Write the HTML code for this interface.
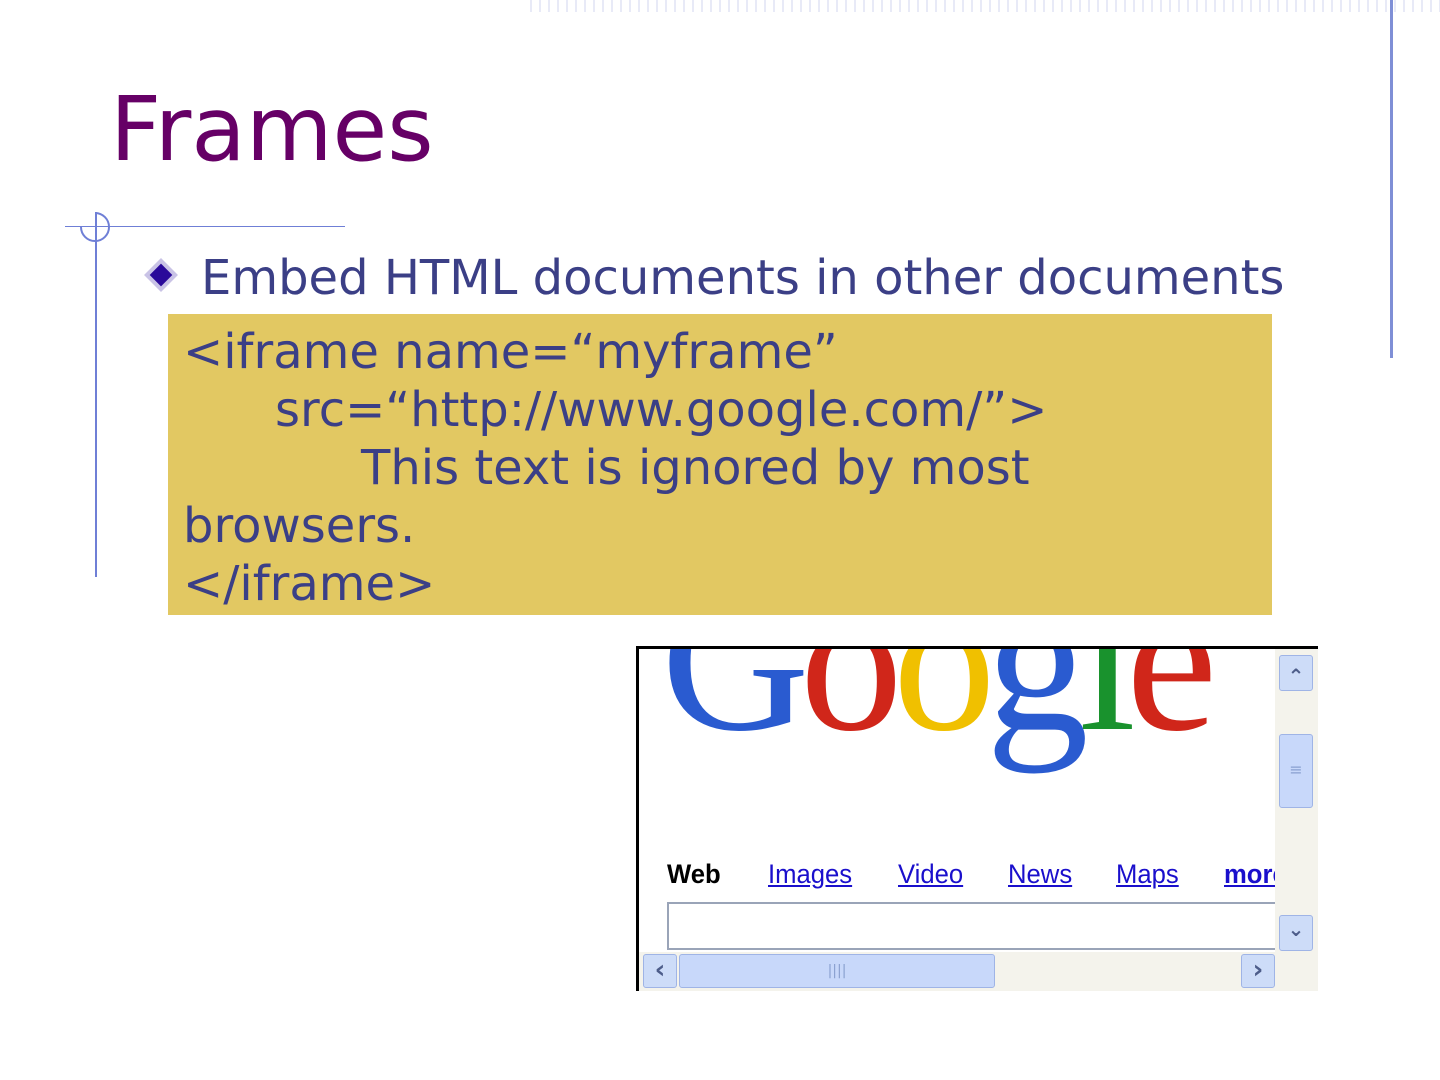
<!DOCTYPE html>
<html><head><meta charset="utf-8"><style>
body{margin:0;width:1440px;height:1080px;background:#fff;position:relative;overflow:hidden;font-family:"DejaVu Sans","Liberation Sans",sans-serif}
.a{position:absolute}
.l{position:absolute;top:210px;font-family:'Liberation Sans',sans-serif;font-size:27px;white-space:nowrap;color:#1a0fcc;text-decoration:underline;transform:scaleX(0.95);transform-origin:0 0}
</style></head><body>
<div class="a" style="left:530px;top:0;width:910px;height:12px;background:repeating-linear-gradient(90deg,#e6e8f6 0 2px,#fff 2px 9px);opacity:.9"></div>
<div class="a" style="left:1390px;top:0;width:3px;height:358px;background:#7f8fd6"></div>
<div class="a" style="left:110px;top:74px;font-size:89px;color:#660066;line-height:110px">Frames</div>
<div class="a" style="left:65px;top:226px;width:280px;height:1px;background:#6f7fd6"></div>
<div class="a" style="left:95px;top:212px;width:2px;height:365px;background:#6f7fd6"></div>
<div class="a" style="left:80px;top:212px;width:30px;height:30px;border:2px solid #6f7fd6;border-radius:50%;box-sizing:border-box;clip-path:inset(0 0 0 50%)"></div>
<div class="a" style="left:80px;top:212px;width:30px;height:30px;border:2px solid #6f7fd6;border-radius:50%;box-sizing:border-box;clip-path:inset(50% 50% 0 0)"></div>
<div class="a" style="left:149px;top:263px;width:24px;height:24px;background:#c9c3e6;transform:rotate(45deg)"></div>
<div class="a" style="left:153px;top:267px;width:16px;height:16px;background:#2a0a9a;transform:rotate(45deg)"></div>
<div class="a" style="left:201px;top:250px;font-size:48px;color:#3b3f86;line-height:56px;white-space:nowrap">Embed HTML documents in other documents</div>
<div class="a" style="left:168px;top:314px;width:1104px;height:301px;background:#e2c862"></div>
<div class="a" style="left:183px;top:323px;font-size:48px;color:#3b3f86;line-height:58px;white-space:nowrap">&lt;iframe name=“myframe”<br><span style="padding-left:92px">src=“http://www.google.com/”&gt;</span><br><span style="padding-left:178px">This text is ignored by most</span><br>browsers.<br>&lt;/iframe&gt;</div>
<div class="a" style="left:636px;top:646px;width:682px;height:345px;border-top:3px solid #000;border-left:3px solid #000;box-sizing:border-box;background:#fff;overflow:hidden">
 <div class="a" style="left:22px;top:-104px;font-family:'Liberation Serif',serif;font-size:206px;letter-spacing:-10px;white-space:nowrap;line-height:230px"><span style="color:#2a5bd0">G</span><span style="color:#d0261a">o</span><span style="color:#f0c000">o</span><span style="color:#2a5bd0">g</span><span style="color:#19922d">l</span><span style="color:#d0261a">e</span></div>
 <div class="l" style="left:28px;color:#000;text-decoration:none;font-weight:bold">Web</div>
 <div class="l" style="left:129px">Images</div>
 <div class="l" style="left:259px">Video</div>
 <div class="l" style="left:369px">News</div>
 <div class="l" style="left:477px">Maps</div>
 <div class="l" style="left:585px;font-weight:bold">more</div>
 <div class="a" style="left:28px;top:253px;width:620px;height:48px;border:2px solid #9aa4b8;box-sizing:border-box;background:#fff"></div>
 <div class="a" style="left:636px;top:0;width:46px;height:345px;background:#f4f3ec"></div>
 <div class="a" style="left:640px;top:6px;width:32px;height:34px;background:#cddcf8;border:1px solid #9fb4e6;border-radius:3px;color:#4d5d8a;text-align:center;font-size:20px;line-height:40px;font-weight:bold">&#x2303;</div>
 <div class="a" style="left:640px;top:85px;width:32px;height:72px;background:#c8d8fa;border:1px solid #9fb4e6;border-radius:3px;color:#8aa0d0;text-align:center;font-size:16px;line-height:70px">≡</div>
 <div class="a" style="left:640px;top:266px;width:32px;height:34px;background:#cddcf8;border:1px solid #9fb4e6;border-radius:3px;color:#4d5d8a;text-align:center;font-size:20px;line-height:26px;font-weight:bold">&#x2304;</div>
 <div class="a" style="left:0;top:303px;width:682px;height:42px;background:#f4f3ec"></div>
 <div class="a" style="left:4px;top:305px;width:32px;height:32px;background:#cddcf8;border:1px solid #9fb4e6;border-radius:3px;color:#4d5d8a;text-align:center;font-size:26px;line-height:30px;font-weight:bold">‹</div>
 <div class="a" style="left:40px;top:305px;width:314px;height:32px;background:#c8d8fa;border:1px solid #9fb4e6;border-radius:3px;color:#8aa0d0;text-align:center;font-size:14px;line-height:32px">||||</div>
 <div class="a" style="left:602px;top:305px;width:32px;height:32px;background:#cddcf8;border:1px solid #9fb4e6;border-radius:3px;color:#4d5d8a;text-align:center;font-size:26px;line-height:30px;font-weight:bold">›</div>
</div>
</body></html>
